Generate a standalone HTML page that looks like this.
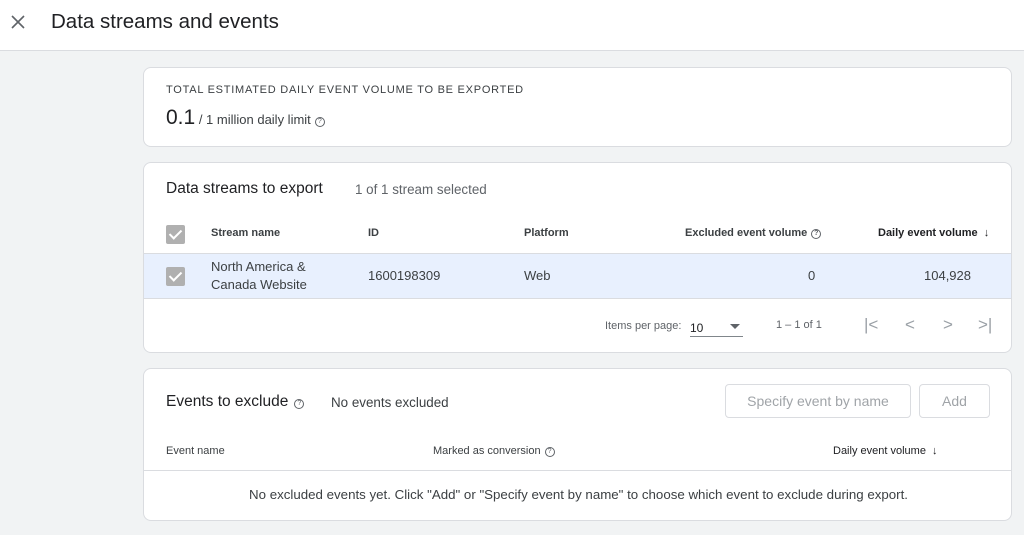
<!DOCTYPE html>
<html><head><style>
*{box-sizing:border-box;margin:0;padding:0}
body{width:1024px;height:535px;overflow:hidden;background:#f1f3f4;font-family:"Liberation Sans",Arial,sans-serif;color:#202124;position:relative}
.hdr{position:absolute;left:0;top:0;width:1024px;height:51px;background:#fff;border-bottom:1px solid #dadce0}
.card{position:absolute;left:143px;width:869px;background:#fff;border:1px solid #dadce0;border-radius:8px;overflow:hidden}
.t{position:absolute;white-space:nowrap}
.cb{position:absolute;width:19px;height:19px;background:#b0b0b0;border-radius:2px}
.cb:after{content:"";position:absolute;left:6px;top:2px;width:5px;height:10px;border:solid #fff;border-width:0 2px 2px 0;transform:rotate(45deg)}
.q{display:inline-block;width:10px;height:10px;border:1px solid #5f6368;border-radius:50%;font-size:7px;line-height:8px;text-align:center;vertical-align:1px;margin-left:4px;color:#5f6368}
.btn{position:absolute;border:1px solid #dadce0;border-radius:4px;color:#a0a4a8;font-size:14px;text-align:center}
</style></head><body>
<div class="hdr">
<svg style="position:absolute;left:10px;top:14px" width="16" height="16" viewBox="0 0 16 16"><path d="M2 2L14 14M14 2L2 14" stroke="#5f6368" stroke-width="1.6"/></svg>
<div class="t" style="left:51px;top:10px;font-size:20.5px;color:#202124">Data streams and events</div>
</div>

<div class="card" style="top:67px;height:80px">
<div class="t" style="left:22px;top:16px;font-size:11px;letter-spacing:.75px;color:#3c4043">TOTAL ESTIMATED DAILY EVENT VOLUME TO BE EXPORTED</div>
<div class="t" style="left:22px;top:38px;font-size:21px">0.1<span style="font-size:13px;color:#3c4043"> / 1 million daily limit</span><span class="q">?</span></div>
</div>

<div class="card" style="top:162px;height:191px">
<div class="t" style="left:22px;top:17px;font-size:15.5px">Data streams to export</div>
<div class="t" style="left:211px;top:19px;font-size:13.4px;color:#5f6368">1 of 1 stream selected</div>
<div class="cb" style="left:22px;top:62px"></div>
<div class="t" style="left:67px;top:64px;font-size:11px;font-weight:bold;color:#3c4043">Stream name</div>
<div class="t" style="left:224px;top:64px;font-size:11px;font-weight:bold;color:#3c4043">ID</div>
<div class="t" style="left:380px;top:64px;font-size:11px;font-weight:bold;color:#3c4043">Platform</div>
<div class="t" style="left:541px;top:64px;font-size:11px;font-weight:bold;color:#3c4043">Excluded event volume<span class="q">?</span></div>
<div class="t" style="left:734px;top:64px;font-size:11px;font-weight:bold;color:#202124">Daily event volume&nbsp; ↓</div>
<div style="position:absolute;left:0;top:90px;width:869px;height:46px;background:#e8f0fe;border-top:1px solid #dadce0;border-bottom:1px solid #dadce0"></div>
<div class="cb" style="left:22px;top:104px"></div>
<div class="t" style="left:67px;top:95px;font-size:13px;line-height:18px;color:#3c4043">North America &amp;<br>Canada Website</div>
<div class="t" style="left:224px;top:105px;font-size:13px;color:#3c4043">1600198309</div>
<div class="t" style="left:380px;top:105px;font-size:13px;color:#3c4043">Web</div>
<div class="t" style="left:664px;top:105px;font-size:13px;color:#3c4043">0</div>
<div class="t" style="left:780px;top:105px;font-size:13px;color:#3c4043">104,928</div>
<div class="t" style="left:461px;top:157px;font-size:11px;color:#5f6368">Items per page:</div>
<div class="t" style="left:546px;top:158px;font-size:12px;width:53px;height:16px;border-bottom:1px solid #80868b">10<span style="position:absolute;left:40px;top:3px;border:5px solid transparent;border-top-color:#5f6368"></span></div>
<div class="t" style="left:632px;top:156px;font-size:11px;color:#5f6368">1 – 1 of 1</div>
<div class="t" style="left:720px;top:152px;font-size:17px;color:#9aa0a6;letter-spacing:0">|&lt;</div>
<div class="t" style="left:761px;top:152px;font-size:17px;color:#9aa0a6">&lt;</div>
<div class="t" style="left:799px;top:152px;font-size:17px;color:#9aa0a6">&gt;</div>
<div class="t" style="left:834px;top:152px;font-size:17px;color:#9aa0a6">&gt;|</div>
</div>

<div class="card" style="top:368px;height:153px">
<div class="t" style="left:22px;top:24px;font-size:15.5px">Events to exclude<span class="q" style="margin-left:6px">?</span></div>
<div class="t" style="left:187px;top:26px;font-size:13.4px;color:#3c4043">No events excluded</div>
<div class="btn" style="left:581px;top:15px;width:186px;height:34px;line-height:32px">Specify event by name</div>
<div class="btn" style="left:775px;top:15px;width:71px;height:34px;line-height:32px">Add</div>
<div class="t" style="left:22px;top:76px;font-size:11px;color:#3c4043">Event name</div>
<div class="t" style="left:289px;top:76px;font-size:11px;color:#3c4043">Marked as conversion<span class="q">?</span></div>
<div class="t" style="left:689px;top:76px;font-size:11px;color:#202124">Daily event volume&nbsp; ↓</div>
<div style="position:absolute;left:0;top:101px;width:869px;border-top:1px solid #dadce0"></div>
<div class="t" style="left:0;width:869px;text-align:center;top:118px;font-size:13.3px;color:#3c4043">No excluded events yet. Click "Add" or "Specify event by name" to choose which event to exclude during export.</div>
</div>
</body></html>
